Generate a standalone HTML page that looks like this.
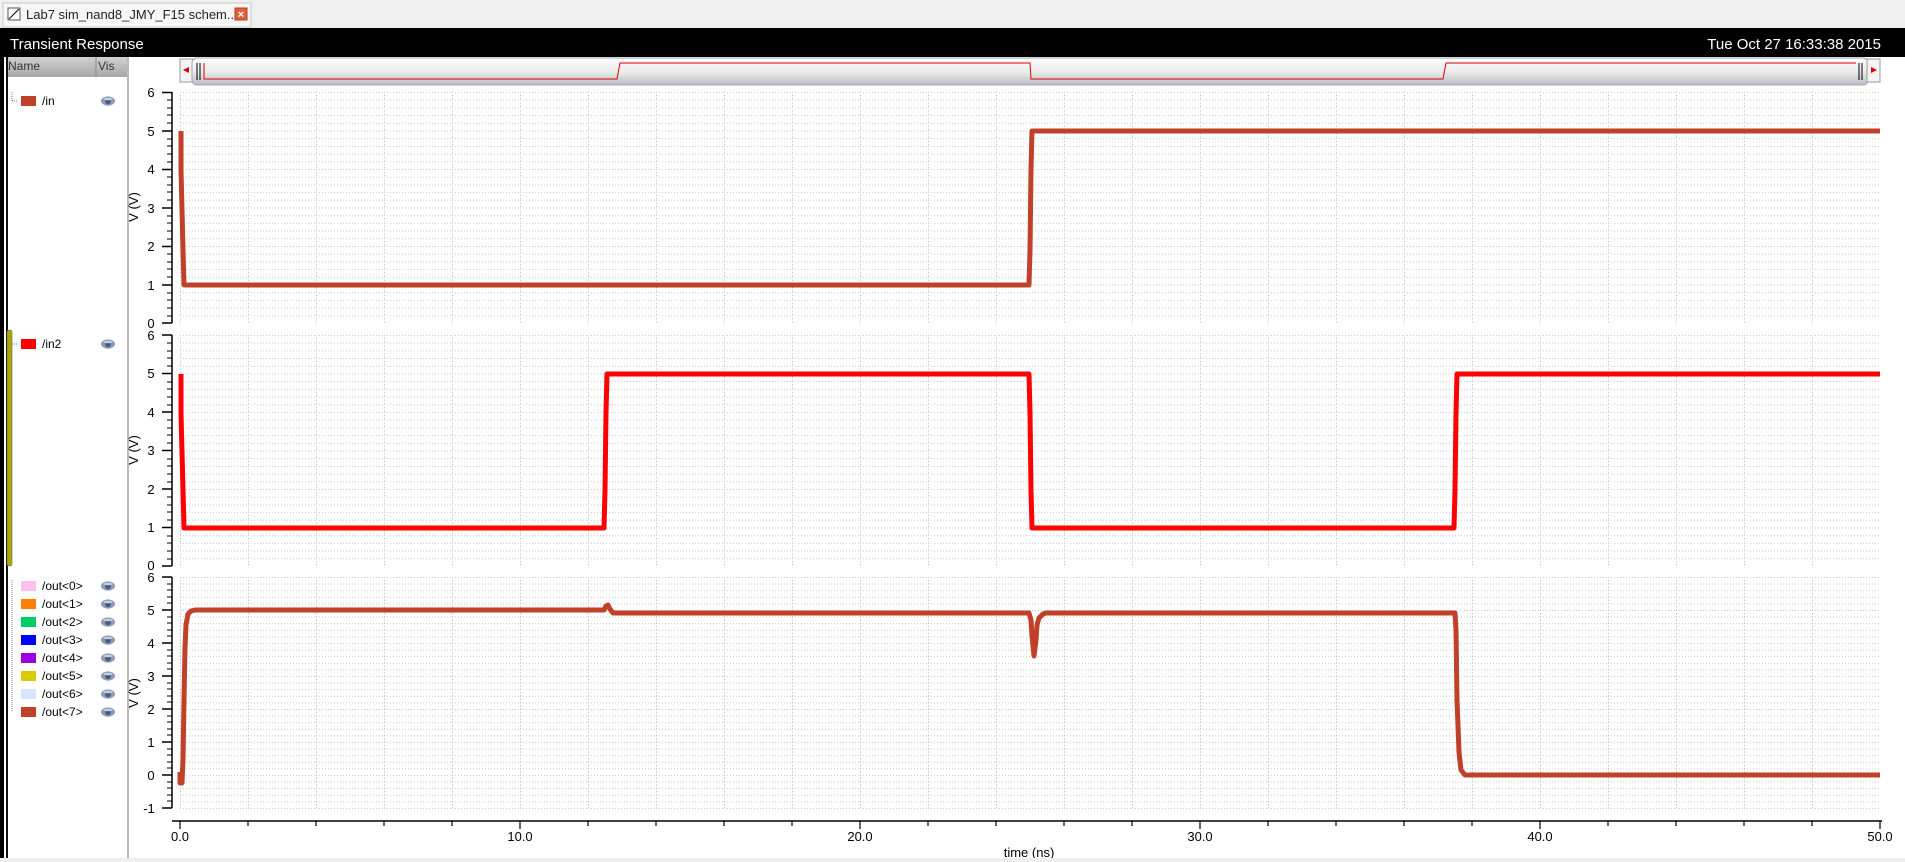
<!DOCTYPE html>
<html><head><meta charset="utf-8"><style>
html,body{margin:0;padding:0;width:1905px;height:862px;overflow:hidden;background:#fff}
svg{display:block;font-family:"Liberation Sans",sans-serif}
</style></head><body>
<svg width="1905" height="862" xmlns="http://www.w3.org/2000/svg">
<defs>
<pattern id="g1" patternUnits="userSpaceOnUse" x="180" y="92" width="68" height="7.7">
<line x1="0.5" y1="0" x2="0.5" y2="7.7" stroke="#b4b4b4" stroke-dasharray="1,2"/>
<line x1="0" y1="0.5" x2="68" y2="0.5" stroke="#c8c8c8" stroke-dasharray="1,2"/>
</pattern>
<pattern id="g2" patternUnits="userSpaceOnUse" x="180" y="335" width="68" height="7.7">
<line x1="0.5" y1="0" x2="0.5" y2="7.7" stroke="#b4b4b4" stroke-dasharray="1,2"/>
<line x1="0" y1="0.5" x2="68" y2="0.5" stroke="#c8c8c8" stroke-dasharray="1,2"/>
</pattern>
<pattern id="g3" patternUnits="userSpaceOnUse" x="180" y="577" width="68" height="6.6">
<line x1="0.5" y1="0" x2="0.5" y2="6.6" stroke="#b4b4b4" stroke-dasharray="1,2"/>
<line x1="0" y1="0.5" x2="68" y2="0.5" stroke="#c8c8c8" stroke-dasharray="1,2"/>
</pattern>
<linearGradient id="sb" x1="0" y1="0" x2="0" y2="1">
<stop offset="0" stop-color="#fdfdfd"/><stop offset="0.5" stop-color="#ececec"/><stop offset="1" stop-color="#b8bcc4"/>
</linearGradient>
<linearGradient id="hd" x1="0" y1="0" x2="0" y2="1">
<stop offset="0" stop-color="#d0d0d0"/><stop offset="1" stop-color="#a8a8a8"/>
</linearGradient>
<g id="eye"><ellipse cx="0" cy="0" rx="7" ry="4.6" fill="#8a9ab8"/><circle cx="0" cy="0.5" r="2.8" fill="#4a5a78"/><ellipse cx="0" cy="-2" rx="4.5" ry="1.2" fill="#c8d0e0"/></g>
</defs>
<rect x="0" y="0" width="1905" height="28" fill="#efefef"/>
<rect x="3" y="3" width="248" height="24" fill="#f6f6f6" stroke="#c8c8c8"/>
<rect x="8" y="8" width="12" height="12" fill="#fff" stroke="#555"/>
<line x1="9" y1="19" x2="19" y2="9" stroke="#000"/>
<text x="26" y="19" font-size="13" fill="#222">Lab7 sim_nand8_JMY_F15 schem...</text>
<rect x="235" y="8" width="12" height="12" fill="#e0603a" stroke="#b04020"/>
<text x="241" y="18" font-size="11" fill="#fff" text-anchor="middle" font-weight="bold">×</text>
<rect x="0" y="28" width="1905" height="29" fill="#000"/>
<text x="10" y="49" font-size="15" fill="#fff">Transient Response</text>
<text x="1881" y="49" font-size="15" fill="#fff" text-anchor="end">Tue Oct 27 16:33:38 2015</text>
<rect x="0" y="57" width="4" height="805" fill="#000"/>
<rect x="6" y="57" width="2" height="805" fill="#111"/>
<rect x="7" y="330" width="5" height="236" rx="2" fill="#a8a800" stroke="#666" stroke-width="0.6"/>
<rect x="8" y="57" width="120" height="20" fill="url(#hd)"/>
<line x1="96" y1="57" x2="96" y2="77" stroke="#888"/>
<text x="8" y="70" font-size="12" fill="#333">Name</text>
<text x="98" y="70" font-size="12" fill="#333">Vis</text>
<rect x="127" y="57" width="2" height="805" fill="#bbb"/>
<g font-size="12" fill="#000">
<line x1="12" y1="92" x2="12" y2="101" stroke="#777" stroke-dasharray="1,1"/><line x1="12" y1="101" x2="17" y2="101" stroke="#777" stroke-dasharray="1,1"/>
<rect x="21" y="96" width="15" height="10" fill="#c0402a"/><text x="42" y="105">/in</text><use href="#eye" x="108" y="101"/>
<line x1="12" y1="344" x2="17" y2="344" stroke="#777" stroke-dasharray="1,1"/>
<rect x="21" y="339" width="15" height="10" fill="#ff0000"/><text x="42" y="348">/in2</text><use href="#eye" x="108" y="344"/>
<line x1="12" y1="580" x2="12" y2="712" stroke="#777" stroke-dasharray="1,1"/>
<rect x="21" y="581" width="15" height="10" fill="#ffc0ee"/><text x="42" y="590">/out&lt;0&gt;</text><use href="#eye" x="108" y="586"/>
<rect x="21" y="599" width="15" height="10" fill="#ff8000"/><text x="42" y="608">/out&lt;1&gt;</text><use href="#eye" x="108" y="604"/>
<rect x="21" y="617" width="15" height="10" fill="#00cc66"/><text x="42" y="626">/out&lt;2&gt;</text><use href="#eye" x="108" y="622"/>
<rect x="21" y="635" width="15" height="10" fill="#0000ff"/><text x="42" y="644">/out&lt;3&gt;</text><use href="#eye" x="108" y="640"/>
<rect x="21" y="653" width="15" height="10" fill="#9900dd"/><text x="42" y="662">/out&lt;4&gt;</text><use href="#eye" x="108" y="658"/>
<rect x="21" y="671" width="15" height="10" fill="#d8cc00"/><text x="42" y="680">/out&lt;5&gt;</text><use href="#eye" x="108" y="676"/>
<rect x="21" y="689" width="15" height="10" fill="#d8e4fc"/><text x="42" y="698">/out&lt;6&gt;</text><use href="#eye" x="108" y="694"/>
<rect x="21" y="707" width="15" height="10" fill="#c0402a"/><text x="42" y="716">/out&lt;7&gt;</text><use href="#eye" x="108" y="712"/>
</g>
<rect x="180" y="59" width="13" height="23" fill="#f4f4f4" stroke="#999"/>
<polygon points="183,70 189,67 189,73" fill="#d00"/>
<rect x="192" y="58" width="1676" height="27" rx="5" fill="url(#sb)" stroke="#a0a4ac"/>
<line x1="197" y1="63" x2="197" y2="80" stroke="#000"/><line x1="200" y1="63" x2="200" y2="80" stroke="#000"/>
<line x1="1859" y1="63" x2="1859" y2="80" stroke="#000"/><line x1="1862" y1="63" x2="1862" y2="80" stroke="#000"/>
<polyline points="204,63 204,79 617,79 620,63 1030,63 1031,79 1443,79 1446,63 1856,63" fill="none" stroke="#d00" stroke-width="1"/>
<rect x="1867" y="59" width="13" height="23" fill="#f4f4f4" stroke="#999"/>
<polygon points="1877,70 1871,67 1871,73" fill="#d00"/>
<rect x="180" y="92" width="1700" height="231" fill="url(#g1)"/>
<rect x="180" y="335" width="1700" height="231" fill="url(#g2)"/>
<rect x="180" y="577" width="1700" height="232" fill="url(#g3)"/>
<g stroke="#000" stroke-width="1.5" fill="none">
<line x1="172" y1="92" x2="172" y2="323"/><line x1="172" y1="335" x2="172" y2="566"/><line x1="172" y1="577" x2="172" y2="808"/>
<path d="M172 92.5h-10M172 131h-10M172 169.5h-10M172 208h-10M172 246.5h-10M172 285h-10M172 323h-10"/>
<path d="M172 335h-10M172 373.5h-10M172 412h-10M172 450.5h-10M172 489h-10M172 527.5h-10M172 566h-10"/>
<path d="M172 577h-10M172 610h-10M172 643h-10M172 676h-10M172 709h-10M172 742h-10M172 775h-10M172 808h-10"/>
</g>
<g stroke="#000" stroke-width="1" fill="none">
<path d="M172 100h-5M172 108h-5M172 115h-5M172 123h-5M172 139h-5M172 146h-5M172 154h-5M172 162h-5M172 177h-5M172 185h-5M172 192h-5M172 200h-5M172 216h-5M172 223h-5M172 231h-5M172 239h-5M172 254h-5M172 262h-5M172 269h-5M172 277h-5M172 293h-5M172 300h-5M172 308h-5M172 316h-5"/>
<path transform="translate(0,243)" d="M172 100h-5M172 108h-5M172 115h-5M172 123h-5M172 139h-5M172 146h-5M172 154h-5M172 162h-5M172 177h-5M172 185h-5M172 192h-5M172 200h-5M172 216h-5M172 223h-5M172 231h-5M172 239h-5M172 254h-5M172 262h-5M172 269h-5M172 277h-5M172 293h-5M172 300h-5M172 308h-5M172 316h-5"/>
<path d="M172 584h-5M172 590h-5M172 597h-5M172 603h-5M172 617h-5M172 623h-5M172 630h-5M172 636h-5M172 650h-5M172 656h-5M172 663h-5M172 669h-5M172 683h-5M172 689h-5M172 696h-5M172 702h-5M172 716h-5M172 722h-5M172 729h-5M172 735h-5M172 749h-5M172 755h-5M172 762h-5M172 768h-5M172 782h-5M172 788h-5M172 795h-5M172 801h-5"/>
</g>
<g font-size="13" fill="#000" text-anchor="middle">
<text x="151" y="97">6</text><text x="151" y="136">5</text><text x="151" y="174">4</text><text x="151" y="213">3</text><text x="151" y="251">2</text><text x="151" y="290">1</text><text x="151" y="328">0</text>
<text x="151" y="340">6</text><text x="151" y="378">5</text><text x="151" y="417">4</text><text x="151" y="455">3</text><text x="151" y="494">2</text><text x="151" y="532">1</text><text x="151" y="570">0</text>
<text x="151" y="582">6</text><text x="151" y="615">5</text><text x="151" y="648">4</text><text x="151" y="681">3</text><text x="151" y="714">2</text><text x="151" y="747">1</text><text x="151" y="780">0</text><text x="149" y="813">-1</text>
<text transform="translate(138,207) rotate(-90)">V (V)</text>
<text transform="translate(138,450) rotate(-90)">V (V)</text>
<text transform="translate(138,693) rotate(-90)">V (V)</text>
</g>
<line x1="172" y1="821" x2="1882" y2="821" stroke="#000" stroke-width="1.5"/>
<g stroke="#000" stroke-width="1.2">
<path d="M180 821v8M248 821v5M316 821v5M384 821v5M452 821v5M520 821v8M588 821v5M656 821v5M724 821v5M792 821v5M860 821v8M928 821v5M996 821v5M1064 821v5M1132 821v5M1200 821v8M1268 821v5M1336 821v5M1404 821v5M1472 821v5M1540 821v8M1608 821v5M1676 821v5M1744 821v5M1812 821v5M1880 821v8"/>
</g>
<g font-size="13" fill="#000" text-anchor="middle">
<text x="180" y="841">0.0</text><text x="520" y="841">10.0</text><text x="860" y="841">20.0</text><text x="1200" y="841">30.0</text><text x="1540" y="841">40.0</text><text x="1880" y="841">50.0</text>
<text x="1029" y="857">time (ns)</text>
</g>
<rect x="0" y="858" width="1905" height="4" fill="#eee"/>
<polyline points="181,131 181,170 182,210 183,250 184,285 190,285 1029,285 1030,250 1031,170 1032,131 1880,131" fill="none" stroke="#c0402a" stroke-width="5" stroke-linejoin="round"/>
<polyline points="181,374 181,413 182,452 183,490 184,528 190,528 604,528 605,490 606,413 607,374 1029,374 1030,413 1031,490 1032,528 1454,528 1455,490 1456,413 1457,374 1880,374" fill="none" stroke="#ff0000" stroke-width="5" stroke-linejoin="round"/>
<polyline points="180,772 180,783 182,783 183,760 184,700 185,648 186,625 188,614 191,611 195,610 604,610 606,606 608,605 610,609 613,613 1029,613 1031,620 1032,636 1034,656 1036,640 1037,625 1039,618 1043,614 1046,613 1455,613 1456,630 1457,700 1459,752 1461,770 1465,775 1880,775" fill="none" stroke="#c0402a" stroke-width="5" stroke-linejoin="round"/>
</svg>
</body></html>
